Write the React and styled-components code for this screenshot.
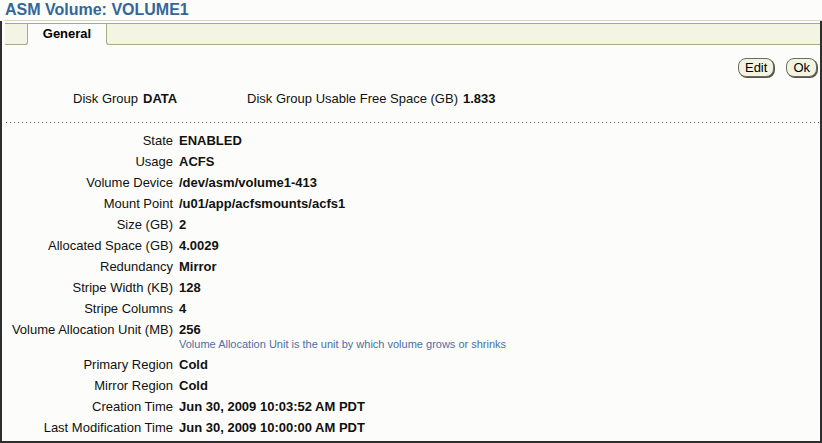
import React from 'react';
import styled, { createGlobalStyle } from 'styled-components';

const GlobalStyle = createGlobalStyle`
  html, body {
    margin: 0;
    padding: 0;
    background: #fcfdfa;
  }
  body {
    font-family: "Liberation Sans", Arial, sans-serif;
  }
`;

const Page = styled.div`
  width: 822px;
  height: 443px;
  display: flex;
  flex-direction: column;
  background: #fcfdfa;
  box-sizing: border-box;
  overflow: hidden;
`;

const Title = styled.h1`
  margin: 0 0 0 4px;
  height: 20px;
  padding-left: 1px;
  font-size: 16px;
  line-height: 20px;
  font-weight: bold;
  color: #336699;
  border-bottom: 1px solid #d3d9bc;
`;

const Frame = styled.div`
  flex: 1;
  min-height: 0;
  display: flex;
  flex-direction: column;
  border-left: 2px solid #2e2e2e;
  border-right: 2px solid #2e2e2e;
  border-bottom: 2px solid #2e2e2e;
  padding-top: 2px;
  overflow: hidden;
`;

const TabBar = styled.div`
  display: flex;
  flex: none;
  height: 21px;
  margin-left: 3px;
  border-top: 1px solid #a3ad80;
`;

const TabFiller = styled.div`
  flex: ${p => (p.$grow ? 1 : 'none')};
  width: ${p => (p.$grow ? 'auto' : '22px')};
  background: #f3f4e3;
  border-bottom: 1px solid #a3ad80;
  border-left: ${p => (p.$grow ? '1px solid #a3ad80' : 'none')};
  border-right: ${p => (p.$grow ? 'none' : '1px solid #a3ad80')};
  border-bottom-left-radius: ${p => (p.$grow ? '3px' : '0')};
  border-bottom-right-radius: ${p => (p.$grow ? '0' : '3px')};
`;

const Tab = styled.div`
  width: 78px;
  text-align: center;
  font-size: 13px;
  font-weight: bold;
  line-height: 20px;
  color: #000;
  background: #fcfdfa;
`;

const ButtonRow = styled.div`
  display: flex;
  flex: none;
  justify-content: flex-end;
  gap: 12px;
  padding: 13px 3px 0 0;
`;

const Button = styled.button`
  height: 19px;
  padding: 0 6px;
  font-family: "Liberation Sans", Arial, sans-serif;
  font-size: 13px;
  line-height: 15px;
  color: #000;
  background: #f3f3e4;
  border: 1px solid #6c6c5c;
  border-radius: 8px;
  box-shadow: 1px 1px 0 #555548;
`;

const SummaryRow = styled.div`
  display: flex;
  flex: none;
  align-items: center;
  height: 21px;
  margin-top: 11px;
  padding-left: 71px;
  font-size: 13px;
`;

const Pair = styled.div`
  width: ${p => p.$width || 'auto'};
  white-space: nowrap;
`;

const Label = styled.span`
  color: #111;
`;

const Value = styled.span`
  font-weight: bold;
  color: #111;
  margin-left: 5px;
`;

const Dotted = styled.div`
  flex: none;
  height: 1px;
  margin: 13px 0 0 4px;
  background-image: linear-gradient(to right, #52627e 1px, transparent 1px);
  background-size: 4px 1px;
`;

const Details = styled.div`
  display: grid;
  grid-template-columns: 171px 1fr;
  column-gap: 6px;
  margin-top: 7px;
  font-size: 13px;
`;

const DLabel = styled.div`
  text-align: right;
  line-height: 21px;
  height: 21px;
  color: #111;
  white-space: nowrap;
`;

const DValue = styled.div`
  line-height: 21px;
  height: 21px;
  font-weight: bold;
  color: #111;
  white-space: nowrap;
`;

const Hint = styled.div`
  grid-column: 2;
  font-size: 11px;
  line-height: 9px;
  height: 14px;
  color: #4a6ea5;
  white-space: nowrap;
`;

const rows = [
  ['State', 'ENABLED'],
  ['Usage', 'ACFS'],
  ['Volume Device', '/dev/asm/volume1-413'],
  ['Mount Point', '/u01/app/acfsmounts/acfs1'],
  ['Size (GB)', '2'],
  ['Allocated Space (GB)', '4.0029'],
  ['Redundancy', 'Mirror'],
  ['Stripe Width (KB)', '128'],
  ['Stripe Columns', '4'],
  ['Volume Allocation Unit (MB)', '256', 'Volume Allocation Unit is the unit by which volume grows or shrinks'],
  ['Primary Region', 'Cold'],
  ['Mirror Region', 'Cold'],
  ['Creation Time', 'Jun 30, 2009 10:03:52 AM PDT'],
  ['Last Modification Time', 'Jun 30, 2009 10:00:00 AM PDT'],
];

export default function App() {
  return (
    <Page>
      <GlobalStyle />
      <Title>ASM Volume: VOLUME1</Title>
      <Frame>
        <TabBar>
          <TabFiller />
          <Tab>General</Tab>
          <TabFiller $grow />
        </TabBar>
        <ButtonRow>
          <Button>Edit</Button>
          <Button>Ok</Button>
        </ButtonRow>
        <SummaryRow>
          <Pair $width="174px">
            <Label>Disk Group</Label>
            <Value>DATA</Value>
          </Pair>
          <Pair>
            <Label>Disk Group Usable Free Space (GB)</Label>
            <Value>1.833</Value>
          </Pair>
        </SummaryRow>
        <Dotted />
        <Details>
          {rows.map(([label, value, hint]) => (
            <React.Fragment key={label}>
              <DLabel>{label}</DLabel>
              <DValue>{value}</DValue>
              {hint && <Hint>{hint}</Hint>}
            </React.Fragment>
          ))}
        </Details>
      </Frame>
    </Page>
  );
}
